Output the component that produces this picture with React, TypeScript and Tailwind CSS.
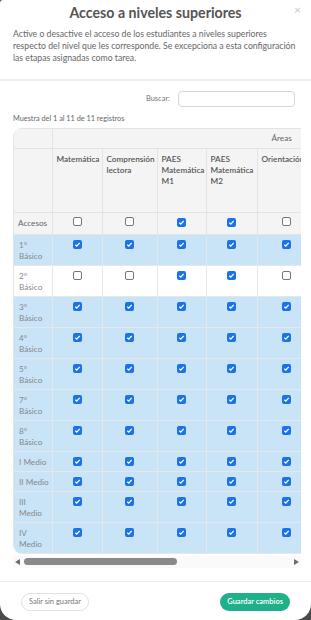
import React from 'react'

const font = { fontFamily: 'Lato, "Open Sans", sans-serif' }

const cols = [
  { name: ['Matemática'], w: 50 },
  { name: ['Comprensión', 'lectora'], w: 55 },
  { name: ['PAES', 'Matemática', 'M1'], w: 49 },
  { name: ['PAES', 'Matemática', 'M2'], w: 51 },
  { name: ['Orientación'], w: 58 },
  { name: ['Historia'], w: 52 },
  { name: ['Ciencias'], w: 52 },
  { name: ['Inglés'], w: 52 },
]

const rows = [
  { label: ['1°', 'Básico'], checks: [1, 1, 1, 1, 1, 1, 1, 1] },
  { label: ['2°', 'Básico'], checks: [0, 0, 1, 1, 0, 0, 0, 0] },
  { label: ['3°', 'Básico'], checks: [1, 1, 1, 1, 1, 1, 1, 1] },
  { label: ['4°', 'Básico'], checks: [1, 1, 1, 1, 1, 1, 1, 1] },
  { label: ['5°', 'Básico'], checks: [1, 1, 1, 1, 1, 1, 1, 1] },
  { label: ['7°', 'Básico'], checks: [1, 1, 1, 1, 1, 1, 1, 1] },
  { label: ['8°', 'Básico'], checks: [1, 1, 1, 1, 1, 1, 1, 1] },
  { label: ['I Medio'], checks: [1, 1, 1, 1, 1, 1, 1, 1] },
  { label: ['II Medio'], checks: [1, 1, 1, 1, 1, 1, 1, 1] },
  { label: ['III', 'Medio'], checks: [1, 1, 1, 1, 1, 1, 1, 1] },
  { label: ['IV', 'Medio'], checks: [1, 1, 1, 1, 1, 1, 1, 1] },
]

const accesos = [0, 0, 1, 1, 0, 0, 0, 0]

const Check = ({ on }: { on: boolean }) =>
  on ? (
    <span className="inline-flex w-[9px] h-[9px] rounded-[2px] bg-[#1a73e8] items-center justify-center">
      <svg width="7" height="7" viewBox="0 0 8 8">
        <path d="M1.5 4.2 L3.2 5.8 L6.5 2.2" stroke="#fff" strokeWidth="1.5" fill="none" />
      </svg>
    </span>
  ) : (
    <span className="inline-block w-[9px] h-[9px] rounded-[2px] border border-[#767676] bg-white"></span>
  )

const App = () => {
  return (
    <div className="w-[311px] h-[620px] bg-[#4b4b4b]" style={font}>
      <div className="w-[311px] h-[620px] bg-white rounded-b-[16px] rounded-tl-[3px] flex flex-col">
        {/* header */}
        <div className="relative pt-[3px] px-[13px]">
          <p className="text-center text-[14.2px] font-bold text-[#555] leading-[20px]">Acceso a niveles superiores</p>
          <span className="absolute right-[10px] top-[1px] text-[12px] text-[#c8c8c8]">×</span>
          <p className="mt-[5px] text-[8.7px] leading-[12px] text-[#666]">
            Active o desactive el acceso de los estudiantes a niveles superiores respecto del nivel que les corresponde. Se excepciona a esta configuración las etapas asignadas como tarea.
          </p>
        </div>
        <div className="mt-[15px] h-[2px] bg-[#efefef]"></div>

        {/* body */}
        <div className="px-[13px] pt-[10px]">
          <div className="flex justify-end items-center gap-[8px] pr-[3px]">
            <span className="text-[7.5px] text-[#777]">Buscar:</span>
            <div className="w-[117px] h-[16px] border border-[#d6d6d6] rounded-[4px]"></div>
          </div>
          <p className="mt-[7px] text-[7.3px] text-[#666]">Muestra del 1 al 11 de 11 registros</p>

          <div className="mt-[3px] w-[288px] overflow-hidden rounded-l-[9px] border-l border-[#e4e4e4]">
            <table className="border-collapse table-fixed w-[457px] text-[8.2px] leading-[11px]">
              <colgroup>
                <col className="w-[38px]" />
                {cols.map((c, i) => (
                  <col key={i} style={{ width: c.w }} />
                ))}
              </colgroup>
              <thead>
                <tr className="h-[20px] bg-[#f4f4f4]">
                  <th className="border border-[#e4e4e4] border-l-0"></th>
                  <th colSpan={8} className="border border-[#e4e4e4] text-left font-normal text-[#666] pl-[219px]">Áreas</th>
                </tr>
                <tr className="h-[64px] bg-[#f4f4f4]">
                  <th className="border border-[#e4e4e4] border-l-0"></th>
                  {cols.map((c, i) => (
                    <th key={i} className="border border-[#e4e4e4] align-top text-left pl-[4px] pt-[5px] font-semibold text-[#555]">
                      {c.name.map((n, j) => (
                        <div key={j} className="whitespace-nowrap">{n}</div>
                      ))}
                    </th>
                  ))}
                </tr>
              </thead>
              <tbody>
                <tr className="h-[22px] bg-[#f4f4f4]">
                  <td className="border border-[#e4e4e4] border-l-0 pl-[4px] text-[#666]">Accesos</td>
                  {accesos.map((a, i) => (
                    <td key={i} className="border border-[#e4e4e4] text-center">
                      <Check on={!!a} />
                    </td>
                  ))}
                </tr>
                {rows.map((r, i) => (
                  <tr
                    key={i}
                    className={`${r.label.length > 1 ? 'h-[31px]' : 'h-[20px]'} ${i === 1 ? 'bg-white' : 'bg-[#c9e4f7]'}`}
                  >
                    <td className="border border-[#e2e8ec] border-l-0 align-top pl-[5px] pt-[5px] text-[#888]">
                      {r.label.map((l, j) => (
                        <div key={j} className="whitespace-nowrap">{l}</div>
                      ))}
                    </td>
                    {r.checks.map((c, j) => (
                      <td key={j} className="border border-[#e2e8ec] text-center align-top pt-[5px]">
                        <Check on={!!c} />
                      </td>
                    ))}
                  </tr>
                ))}
              </tbody>
            </table>
          </div>

          {/* scrollbar */}
          <div className="mt-[2px] w-[288px] h-[12px] bg-[#fafafa] flex items-center px-[2px] gap-[4px]">
            <span className="w-0 h-0 border-y-[3.5px] border-y-transparent border-r-[5px] border-r-[#6e6e6e]"></span>
            <div className="flex-1 h-[7px]">
              <div className="w-[153px] h-[7px] rounded-full bg-[#8a8a8a]"></div>
            </div>
            <span className="w-0 h-0 border-y-[3.5px] border-y-transparent border-l-[5px] border-l-[#6e6e6e]"></span>
          </div>
        </div>

        <div className="mt-[13px] h-[1px] bg-[#ececec]"></div>
        <div className="flex justify-between items-center px-[21px] pt-[11px]">
          <button className="h-[18px] px-[7px] rounded-full border border-[#e2e2e2] text-[7.5px] text-[#777]">Salir sin guardar</button>
          <button className="h-[18px] px-[7px] rounded-full bg-[#1fb08a] text-[7.5px] font-semibold text-white">Guardar cambios</button>
        </div>
      </div>
    </div>
  )
}

export default App
